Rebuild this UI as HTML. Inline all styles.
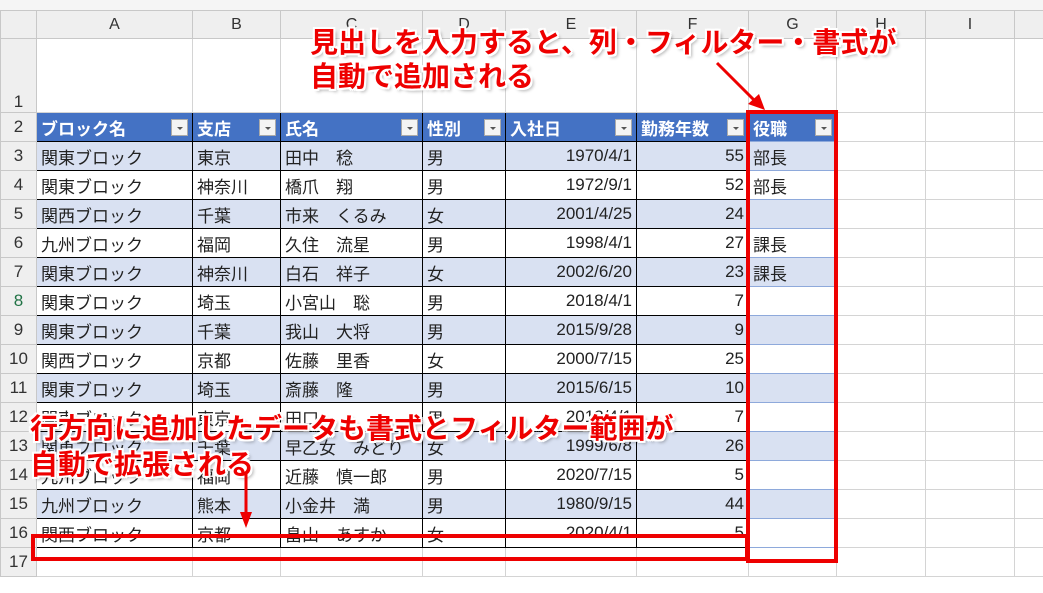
<!DOCTYPE html>
<html><head><meta charset="utf-8"><style>
body{margin:0;width:1043px;height:593px;overflow:hidden;background:#fff;font-family:"Liberation Sans","Noto Sans CJK JP",sans-serif;position:relative}
.a{position:absolute}
table{position:absolute;left:0;top:10px;width:1054px;border-collapse:collapse;table-layout:fixed;font-size:17px}
td{padding:0 4px;white-space:nowrap;overflow:hidden;border:1px solid #d4d4d4;height:29px;position:relative;color:#222;box-sizing:border-box}
tr.ch td{background:#efefef;text-align:center;height:28px;color:#333;font-size:16px;border-color:#c8c8c8}
td.rn{background:#efefef;text-align:center;color:#333;border-color:#c8c8c8;padding:0}
tr.h td.t{background:#4472c4;color:#fff;font-weight:bold;border:1px solid #000}
tr.h td.g{border-color:#8ea9db}
td.t{border:1px solid #000}
td.g{border:1px solid #8ea9db}
tr.o td.t,tr.o td.g{background:#d9e1f2}
td.r{text-align:right}
.dd{position:absolute;right:4px;top:6px;width:17px;height:17px;background:#f4f4f4;border:1px solid #aaa;box-sizing:border-box}
.dd:after{content:"";position:absolute;left:5px;top:7px;border-left:3px solid transparent;border-right:3px solid transparent;border-top:3px solid #555}
.note{position:absolute;color:#e00;font-size:28px;font-weight:bold;line-height:34px;white-space:nowrap;text-shadow:2px 0 #fff,-2px 0 #fff,0 2px #fff,0 -2px #fff,2px 2px #fff,-2px -2px #fff,2px -2px #fff,-2px 2px #fff,3px 3px 3px rgba(0,0,0,.3)}
.box{position:absolute;border:4px solid #e00;box-sizing:border-box}
</style></head><body>
<div class="a" style="left:0;top:0;width:1043px;height:10px;background:#f5f5f5"></div>
<table>
<colgroup><col style="width:36px"><col style="width:156px"><col style="width:88px"><col style="width:142px"><col style="width:83px"><col style="width:131px"><col style="width:112px"><col style="width:88px"><col style="width:89px"><col style="width:89px"><col style="width:40px"></colgroup>
<tr class="ch"><td></td><td>A</td><td>B</td><td>C</td><td>D</td><td>E</td><td>F</td><td>G</td><td>H</td><td>I</td><td></td></tr>
<tr><td class="rn" style="height:74px;vertical-align:bottom">1</td><td></td><td></td><td></td><td></td><td></td><td></td><td></td><td></td><td></td><td></td></tr>
<tr class="h"><td class="rn">2</td><td class="t">ブロック名<span class="dd"></span></td><td class="t">支店<span class="dd"></span></td><td class="t">氏名<span class="dd"></span></td><td class="t">性別<span class="dd"></span></td><td class="t">入社日<span class="dd"></span></td><td class="t">勤務年数<span class="dd"></span></td><td class="t g">役職<span class="dd"></span></td><td></td><td></td><td></td></tr>
<tr class="o"><td class="rn">3</td><td class="t">関東ブロック</td><td class="t">東京</td><td class="t">田中　稔</td><td class="t">男</td><td class="t r">1970/4/1</td><td class="t r">55</td><td class="g">部長</td><td></td><td></td><td></td></tr>
<tr><td class="rn">4</td><td class="t">関東ブロック</td><td class="t">神奈川</td><td class="t">橋爪　翔</td><td class="t">男</td><td class="t r">1972/9/1</td><td class="t r">52</td><td class="g">部長</td><td></td><td></td><td></td></tr>
<tr class="o"><td class="rn">5</td><td class="t">関西ブロック</td><td class="t">千葉</td><td class="t">市来　くるみ</td><td class="t">女</td><td class="t r">2001/4/25</td><td class="t r">24</td><td class="g"></td><td></td><td></td><td></td></tr>
<tr><td class="rn">6</td><td class="t">九州ブロック</td><td class="t">福岡</td><td class="t">久住　流星</td><td class="t">男</td><td class="t r">1998/4/1</td><td class="t r">27</td><td class="g">課長</td><td></td><td></td><td></td></tr>
<tr class="o"><td class="rn">7</td><td class="t">関東ブロック</td><td class="t">神奈川</td><td class="t">白石　祥子</td><td class="t">女</td><td class="t r">2002/6/20</td><td class="t r">23</td><td class="g">課長</td><td></td><td></td><td></td></tr>
<tr><td class="rn" style="color:#217346">8</td><td class="t">関東ブロック</td><td class="t">埼玉</td><td class="t">小宮山　聡</td><td class="t">男</td><td class="t r">2018/4/1</td><td class="t r">7</td><td class="g"></td><td></td><td></td><td></td></tr>
<tr class="o"><td class="rn">9</td><td class="t">関東ブロック</td><td class="t">千葉</td><td class="t">我山　大将</td><td class="t">男</td><td class="t r">2015/9/28</td><td class="t r">9</td><td class="g"></td><td></td><td></td><td></td></tr>
<tr><td class="rn">10</td><td class="t">関西ブロック</td><td class="t">京都</td><td class="t">佐藤　里香</td><td class="t">女</td><td class="t r">2000/7/15</td><td class="t r">25</td><td class="g"></td><td></td><td></td><td></td></tr>
<tr class="o"><td class="rn">11</td><td class="t">関東ブロック</td><td class="t">埼玉</td><td class="t">斎藤　隆</td><td class="t">男</td><td class="t r">2015/6/15</td><td class="t r">10</td><td class="g"></td><td></td><td></td><td></td></tr>
<tr><td class="rn">12</td><td class="t">関東ブロック</td><td class="t">東京</td><td class="t">田口</td><td class="t">男</td><td class="t r">2018/4/1</td><td class="t r">7</td><td class="g"></td><td></td><td></td><td></td></tr>
<tr class="o"><td class="rn">13</td><td class="t">関東ブロック</td><td class="t">千葉</td><td class="t">早乙女　みどり</td><td class="t">女</td><td class="t r">1999/6/8</td><td class="t r">26</td><td class="g"></td><td></td><td></td><td></td></tr>
<tr><td class="rn">14</td><td class="t">九州ブロック</td><td class="t">福岡</td><td class="t">近藤　慎一郎</td><td class="t">男</td><td class="t r">2020/7/15</td><td class="t r">5</td><td class="g"></td><td></td><td></td><td></td></tr>
<tr class="o"><td class="rn">15</td><td class="t">九州ブロック</td><td class="t">熊本</td><td class="t">小金井　満</td><td class="t">男</td><td class="t r">1980/9/15</td><td class="t r">44</td><td class="g"></td><td></td><td></td><td></td></tr>
<tr><td class="rn">16</td><td class="t">関西ブロック</td><td class="t">京都</td><td class="t">畠山　あすか</td><td class="t">女</td><td class="t r">2020/4/1</td><td class="t r">5</td><td class="g"></td><td></td><td></td><td></td></tr>
<tr><td class="rn">17</td><td></td><td></td><td></td><td></td><td></td><td></td><td></td><td></td><td></td><td></td></tr>
</table>
<div class="box" style="left:746px;top:110px;width:92px;height:453px"></div>
<div class="box" style="left:31px;top:534px;width:718px;height:27px"></div>
<div class="note" style="left:310px;top:26px">見出しを入力すると、列・フィルター・書式が</div>
<div class="note" style="left:310px;top:60px">自動で追加される</div>
<div class="note" style="left:30px;top:412px">行方向に追加したデータも書式とフィルター範囲が</div>
<div class="note" style="left:30px;top:448px">自動で拡張される</div>
<svg class="a" style="left:0;top:0" width="1043" height="593">
<line x1="717" y1="63" x2="756" y2="102" stroke="#e00" stroke-width="3"/>
<polygon points="765,110 748,104 759,94" fill="#e00"/>
<line x1="246" y1="472" x2="246" y2="515" stroke="#e00" stroke-width="3"/>
<polygon points="246,528 240,512 252,512" fill="#e00"/>
</svg>
</body></html>
